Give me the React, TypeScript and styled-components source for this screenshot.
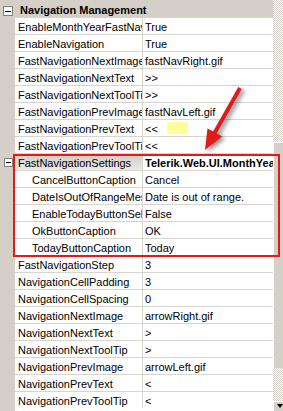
import React from 'react'
import styled, { createGlobalStyle } from 'styled-components'

const colors = {
  face: '#d4d0c8',
  line: '#d8d5cf',
  red: '#e3191c',
  yellow: '#ffff99',
}

type Prop = { name: string; value: string; sub?: boolean; group?: boolean; highlight?: boolean }

const props: Prop[] = [
  { name: 'EnableMonthYearFastNavigation', value: 'True' },
  { name: 'EnableNavigation', value: 'True' },
  { name: 'FastNavigationNextImage', value: 'fastNavRight.gif' },
  { name: 'FastNavigationNextText', value: '>>' },
  { name: 'FastNavigationNextToolTip', value: '>>' },
  { name: 'FastNavigationPrevImage', value: 'fastNavLeft.gif' },
  { name: 'FastNavigationPrevText', value: '<<', highlight: true },
  { name: 'FastNavigationPrevToolTip', value: '<<' },
  { name: 'FastNavigationSettings', value: 'Telerik.Web.UI.MonthYearFastNavigationSettings', group: true },
  { name: 'CancelButtonCaption', value: 'Cancel', sub: true },
  { name: 'DateIsOutOfRangeMessage', value: 'Date is out of range.', sub: true },
  { name: 'EnableTodayButtonSelection', value: 'False', sub: true },
  { name: 'OkButtonCaption', value: 'OK', sub: true },
  { name: 'TodayButtonCaption', value: 'Today', sub: true },
  { name: 'FastNavigationStep', value: '3' },
  { name: 'NavigationCellPadding', value: '3' },
  { name: 'NavigationCellSpacing', value: '0' },
  { name: 'NavigationNextImage', value: 'arrowRight.gif' },
  { name: 'NavigationNextText', value: '>' },
  { name: 'NavigationNextToolTip', value: '>' },
  { name: 'NavigationPrevImage', value: 'arrowLeft.gif' },
  { name: 'NavigationPrevText', value: '<' },
  { name: 'NavigationPrevToolTip', value: '<' },
]

export default function App() {
  return (
    <>
      <Global />
      <S.Frame>
        <S.Grid>
          <S.Category>
            <S.Expander />
            <S.CategoryLabel>Navigation Management</S.CategoryLabel>
          </S.Category>
          {props.map(p => (
            <S.Row key={p.name}>
              <S.Gutter>{p.group && <S.Expander small />}</S.Gutter>
              <S.Name sub={p.sub} shaded={p.group}>{p.name}</S.Name>
              <S.Value bold={p.group}>
                {p.value}
                {p.highlight && <S.Highlight />}
              </S.Value>
            </S.Row>
          ))}
        </S.Grid>
        <S.ScrollBar>
          <S.Track style={{ height: 142 }} />
          <S.Thumb />
          <S.Track style={{ flex: 1 }} />
          <S.DownButton>
            <S.DownArrow />
          </S.DownButton>
        </S.ScrollBar>

        <S.RedBox />
        <S.Arrow viewBox="0 0 283 411">
          <line x1="240" y1="88" x2="214" y2="134" stroke={colors.red} strokeWidth="4" />
          <polygon points="205,150 207.5,128.5 222,136.5" fill={colors.red} />
        </S.Arrow>
      </S.Frame>
    </>
  )
}

const Global = createGlobalStyle`
  html, body {
    margin: 0;
    padding: 0;
    background: #fff;
    overflow: hidden;
  }
  body {
    font-family: "Liberation Sans", Arial, sans-serif;
    font-size: 11px;
    color: #000;
  }
`

const S = {
  Frame: styled.div`
    position: relative;
    width: 283px;
    height: 411px;
    display: flex;
    overflow: hidden;
  `,
  Grid: styled.div`
    flex: 1;
    display: flex;
    flex-direction: column;
    background: linear-gradient(to right, ${colors.face} 15px, #fff 15px);
  `,
  Category: styled.div`
    height: 17px;
    flex: none;
    display: flex;
    align-items: flex-start;
    background: ${colors.face};
  `,
  Expander: styled.span<{ small?: boolean }>`
    position: relative;
    box-sizing: border-box;
    width: ${p => (p.small ? 9 : 10)}px;
    height: ${p => (p.small ? 9 : 10)}px;
    margin: ${p => (p.small ? '5px 0 0 4px' : '6px 0 0 3px')};
    border: 1px solid #808080;
    background: #fff;
    flex: none;
    &::after {
      content: '';
      position: absolute;
      left: 1px;
      right: 1px;
      top: 50%;
      height: 1px;
      margin-top: -0.5px;
      background: #000;
    }
  `,
  CategoryLabel: styled.span`
    margin-left: 7px;
    padding-top: 2px;
    line-height: 16px;
    font-weight: bold;
    white-space: nowrap;
    overflow: hidden;
  `,
  Row: styled.div`
    display: grid;
    grid-template-columns: 15px 128px 1fr;
    height: 17px;
    flex: none;
  `,
  Gutter: styled.div`
    background: ${colors.face};
    display: flex;
  `,
  Name: styled.div<{ sub?: boolean; shaded?: boolean }>`
    box-sizing: border-box;
    border-top: 1px solid ${colors.line};
    border-right: 1px solid ${colors.line};
    padding: 1px 0 0 ${p => (p.sub ? 17 : 3)}px;
    line-height: 16px;
    white-space: nowrap;
    overflow: hidden;
    background: ${p => (p.shaded ? 'linear-gradient(#cfccc5, #eceae6)' : '#fff')};
  `,
  Value: styled.div<{ bold?: boolean }>`
    box-sizing: border-box;
    border-top: 1px solid ${colors.line};
    padding: 1px 0 0 2px;
    line-height: 16px;
    white-space: nowrap;
    overflow: hidden;
    font-weight: ${p => (p.bold ? 'bold' : 'normal')};
  `,
  Highlight: styled.span`
    display: inline-block;
    width: 21px;
    height: 12px;
    margin-left: 9px;
    vertical-align: -1px;
    background: ${colors.yellow};
  `,
  ScrollBar: styled.div`
    width: 10px;
    flex: none;
    display: flex;
    flex-direction: column;
  `,
  Track: styled.div`
    background: repeating-conic-gradient(${colors.face} 0 25%, #fff 0 50%) 0 0 / 2px 2px;
  `,
  Thumb: styled.div`
    height: 226px;
    background: ${colors.face};
    box-shadow: inset 1px 1px 0 #fff;
  `,
  DownButton: styled.div`
    height: 10px;
    flex: none;
    background: ${colors.face};
    box-shadow: inset 1px 1px 0 #fff;
    display: flex;
    justify-content: flex-end;
    padding-top: 3px;
    box-sizing: border-box;
  `,
  DownArrow: styled.span`
    width: 0;
    height: 0;
    border-left: 3px solid transparent;
    border-right: 3px solid transparent;
    border-top: 4px solid #000;
    margin-right: 0;
  `,
  RedBox: styled.div`
    position: absolute;
    left: 13px;
    top: 154px;
    width: 267px;
    height: 103px;
    box-sizing: border-box;
    border: 2px solid ${colors.red};
    pointer-events: none;
  `,
  Arrow: styled.svg`
    position: absolute;
    left: 0;
    top: 0;
    width: 283px;
    height: 411px;
    pointer-events: none;
    filter: drop-shadow(3px 2px 2px rgba(0, 0, 0, 0.45));
  `,
}
